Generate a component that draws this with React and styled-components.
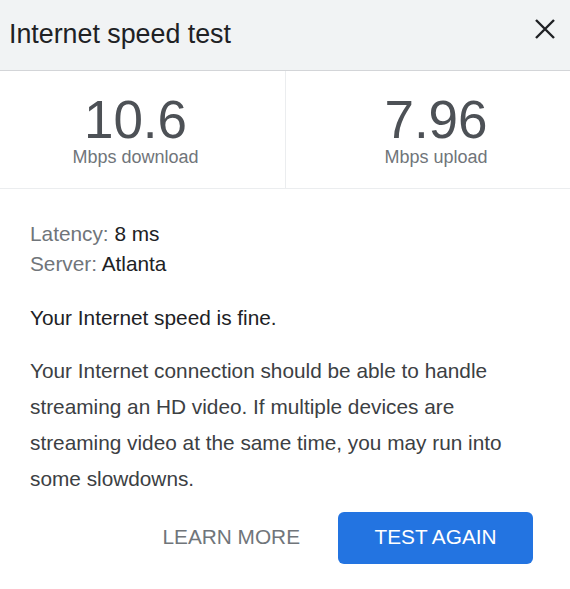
import React from 'react';
import styled, { createGlobalStyle } from 'styled-components';

const GlobalStyle = createGlobalStyle`
  html, body {
    margin: 0;
    padding: 0;
    background: #ffffff;
    font-family: "Liberation Sans", Arial, sans-serif;
  }
`;

const Dialog = styled.div`
  width: 570px;
  height: 589px;
  display: flex;
  flex-direction: column;
  background: #ffffff;
  overflow: hidden;
`;

const Header = styled.div`
  height: 70px;
  display: flex;
  align-items: center;
  justify-content: space-between;
  padding: 0 13px 0 9px;
  background: #f1f3f4;
  border-bottom: 1px solid #d3d5d8;
`;

const Title = styled.div`
  font-size: 26.8px;
  color: #202124;
  margin-top: -2px;
`;

const CloseButton = styled.button`
  width: 24px;
  height: 24px;
  padding: 0;
  border: none;
  background: none;
  display: flex;
  align-items: center;
  justify-content: center;
  margin-top: -12px;
  cursor: pointer;
`;

const Stats = styled.div`
  display: grid;
  grid-template-columns: 285px 1fr;
  height: 117px;
  border-bottom: 1px solid #ebedef;
`;

const Stat = styled.div`
  display: flex;
  flex-direction: column;
  align-items: center;
  justify-content: center;
  padding: ${p => (p.$right ? '0 0 0 16px' : '0 14px 0 0')};
  border-left: ${p => (p.$right ? '1px solid #ebedef' : 'none')};
`;

const Value = styled.div`
  font-size: 53px;
  line-height: 44px;
  color: #4d5156;
  margin: 6px 0 5px;
`;

const Unit = styled.div`
  font-size: 18px;
  line-height: 20px;
  color: #70757a;
`;

const Body = styled.div`
  padding: 30px 37px 0 30px;
  display: flex;
  flex-direction: column;
  font-size: 20.8px;
  color: #202124;
`;

const Meta = styled.div`
  line-height: 30px;
`;

const MetaLabel = styled.span`
  color: #70757a;
`;

const Summary = styled.p`
  margin: 24px 0 0;
  line-height: 30px;
  color: #202124;
`;

const Detail = styled.p`
  margin: 20px 0 0;
  line-height: 36px;
  color: #3c4043;
`;

const Actions = styled.div`
  display: flex;
  justify-content: flex-end;
  align-items: center;
  gap: 20px;
  margin-top: 15px;
`;

const ActionButton = styled.button`
  height: 52px;
  padding: 0 ${p => (p.$primary ? '34px' : '18px')};
  min-width: ${p => (p.$primary ? '195px' : 'auto')};
  border: none;
  border-radius: 6px;
  background: ${p => (p.$primary ? '#2374e1' : 'transparent')};
  color: ${p => (p.$primary ? '#ffffff' : '#70757a')};
  font-family: "Liberation Sans", Arial, sans-serif;
  font-size: 20.8px;
  line-height: 24px;
  padding-bottom: 3px;
  cursor: pointer;
`;

export default function App() {
  return (
    <>
      <GlobalStyle />
      <Dialog>
        <Header>
          <Title>Internet speed test</Title>
          <CloseButton aria-label="Close">
            <svg width="22" height="22" viewBox="0 0 22 22">
              <path d="M2 2 L20 20 M20 2 L2 20" stroke="#202124" strokeWidth="2.4" fill="none" />
            </svg>
          </CloseButton>
        </Header>
        <Stats>
          <Stat>
            <Value>10.6</Value>
            <Unit>Mbps download</Unit>
          </Stat>
          <Stat $right>
            <Value>7.96</Value>
            <Unit>Mbps upload</Unit>
          </Stat>
        </Stats>
        <Body>
          <Meta><MetaLabel>Latency:</MetaLabel> 8 ms</Meta>
          <Meta><MetaLabel>Server:</MetaLabel> Atlanta</Meta>
          <Summary>Your Internet speed is fine.</Summary>
          <Detail>
            Your Internet connection should be able to handle streaming an HD video. If multiple
            devices are streaming video at the same time, you may run into some slowdowns.
          </Detail>
          <Actions>
            <ActionButton>LEARN MORE</ActionButton>
            <ActionButton $primary>TEST AGAIN</ActionButton>
          </Actions>
        </Body>
      </Dialog>
    </>
  );
}
